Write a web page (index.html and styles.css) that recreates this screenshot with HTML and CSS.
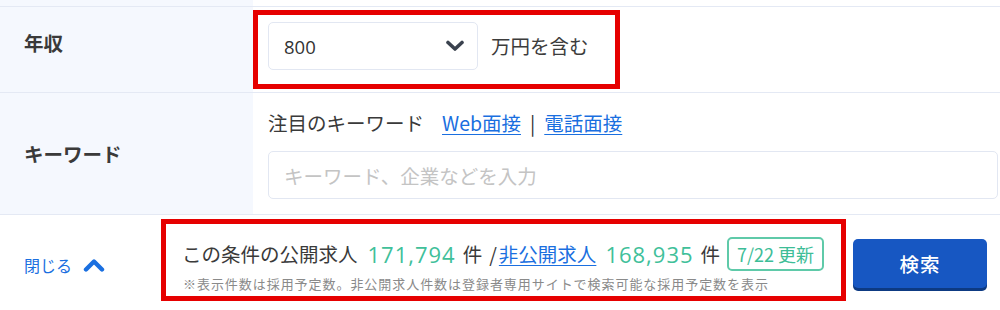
FILE: index.html
```html
<!DOCTYPE html>
<html lang="ja">
<head>
<meta charset="utf-8">
<title>検索条件</title>
<link rel="stylesheet" href="styles.css">
</head>
<body>
<div class="page">
  <div class="row row--stub">
    <div class="label"></div>
    <div class="field"></div>
  </div>
  <div class="row row--salary">
    <div class="label label--top">年収</div>
    <div class="field salary">
      <div class="select">
        <span class="select-value">800</span>
        <svg class="select-arrow" width="20" height="12" viewBox="0 0 20 12"><polyline points="3,2.5 10,9 17,2.5" fill="none" stroke="#3a424e" stroke-width="3.6" stroke-linecap="round" stroke-linejoin="round"/></svg>
      </div>
      <span class="unit">万円を含む</span>
    </div>
  </div>
  <div class="row row--keyword">
    <div class="label">キーワード</div>
    <div class="field keyword">
      <div class="hot">
        <span class="hot-title">注目のキーワード</span>
        <a class="link" href="#">Web面接</a>
        <span class="sep">|</span>
        <a class="link" href="#">電話面接</a>
      </div>
      <input class="text-input" type="text" placeholder="キーワード、企業などを入力">
    </div>
  </div>
  <div class="footer">
    <a class="close" href="#">閉じる
      <svg width="22" height="14" viewBox="0 0 22 14"><polyline points="3,11.5 11,3.5 19,11.5" fill="none" stroke="#1a6fe0" stroke-width="4.4" stroke-linecap="round" stroke-linejoin="round"/></svg>
    </a>
    <div class="result">
      <div class="count">
        <span>この条件の公開求人</span>
        <span class="num">171,794</span>
        <span class="ken">件</span>
        <span class="slash">/</span>
        <a class="link link--hidden" href="#">非公開求人</a>
        <span class="num">168,935</span>
        <span class="ken">件</span>
        <span class="badge">7/22 更新</span>
      </div>
      <p class="note">※表示件数は採用予定数。非公開求人件数は登録者専用サイトで検索可能な採用予定数を表示</p>
    </div>
    <button class="search" type="button">検索</button>
  </div>
  <div class="mark mark--salary"></div>
  <div class="mark mark--result"></div>
</div>
</body>
</html>
```
FILE: styles.css
```css
* { box-sizing: border-box; }
html, body { margin: 0; padding: 0; background: #fff; }
body {
  font-family: "Noto Sans CJK JP", "Noto Sans", sans-serif;
  color: #333;
  font-size: 19.5px;
}
.page {
  position: relative;
  width: 1000px;
  height: 310px;
  overflow: hidden;
}
.row {
  display: grid;
  grid-template-columns: 253px 1fr;
  border-bottom: 1px solid #e4e9f4;
}
.row--stub { height: 7px; }
.row--salary { height: 86px; }
.row--keyword { height: 122px; }
.label {
  background: #f5f8fe;
  padding-left: 24px;
  display: flex;
  align-items: center;
  font-weight: bold;
  color: #3a3a3a;
}
.label--top {
  align-items: flex-start;
  padding-top: 22px;
  line-height: 28px;
}
.field { padding-left: 15px; }
.salary {
  display: flex;
  align-items: flex-start;
  padding-top: 15px;
}
.select {
  width: 210px;
  height: 48px;
  border: 1px solid #e2e7f2;
  border-radius: 5px;
  display: flex;
  align-items: center;
  justify-content: space-between;
  padding: 0 12px 0 15px;
  background: #fff;
}
.select-value {
  font-family: "Open Sans", "Noto Sans", sans-serif;
  font-size: 18.5px;
  color: #333;
}
.unit {
  margin-left: 13px;
  line-height: 48px;
  color: #3c3c3c;
}
.keyword {
  display: flex;
  flex-direction: column;
  padding-top: 14px;
  padding-right: 2px;
}
.hot {
  display: flex;
  align-items: center;
  height: 30px;
}
.hot-title { color: #3a3a3a; }
.link {
  color: #1a6fe0;
  text-decoration: underline;
  text-underline-offset: 3px;
}
.hot .link:first-of-type { margin-left: 18px; }
.sep { margin: 0 9px; color: #333; }
.text-input {
  margin-top: 14px;
  height: 48px;
  width: 100%;
  border: 1px solid #e2e7f2;
  border-radius: 5px;
  padding: 0 15px;
  font-family: "Noto Sans CJK JP", sans-serif;
  font-size: 19.5px;
  color: #333;
  outline: none;
}
.text-input::placeholder { color: #c4c4c4; }
.footer {
  display: flex;
  align-items: center;
  height: 94px;
  padding-top: 6px;
}
.close {
  width: 182px;
  padding-left: 24px;
  display: flex;
  align-items: center;
  gap: 11px;
  color: #1a6fe0;
  text-decoration: none;
  font-size: 16px;
}
.result {
  flex: 1;
  display: flex;
  flex-direction: column;
}
.count {
  display: flex;
  align-items: center;
  height: 34px;
  white-space: nowrap;
  color: #3a3a3a;
}
.num {
  font-family: "Open Sans", "Noto Sans", sans-serif;
  font-size: 22px;
  letter-spacing: 1px;
  color: #40c09a;
  margin-left: 10px;
}
.ken { margin-left: 7px; }
.slash { margin-left: 7px; }
.link--hidden { margin-left: 2px; }
.count .link + .num { margin-left: 9px; }
.badge {
  margin-left: 7px;
  height: 34px;
  padding: 0 8px;
  border: 2px solid #5fcaa9;
  border-radius: 5px;
  display: flex;
  align-items: center;
  color: #3dbd97;
  font-size: 18px;
}
.note {
  margin: 3px 0 0 1px;
  font-size: 13px;
  letter-spacing: 0.95px;
  line-height: 20px;
  color: #8a8a8a;
  white-space: nowrap;
}
.search {
  width: 134px;
  height: 49px;
  margin: 0 13px 3px 0;
  border: none;
  border-radius: 5px;
  background: #1757c2;
  box-shadow: 0 3px 0 #0d3a82;
  color: #fff;
  font-family: "Noto Sans CJK JP", sans-serif;
  font-size: 19.5px;
  font-weight: 500;
  letter-spacing: 1px;
}
.mark {
  position: absolute;
  border: 5px solid #e60000;
  pointer-events: none;
}
.mark--salary { left: 253px; top: 10px; width: 367px; height: 79px; }
.mark--result { left: 161px; top: 219px; width: 685px; height: 82px; }
```
